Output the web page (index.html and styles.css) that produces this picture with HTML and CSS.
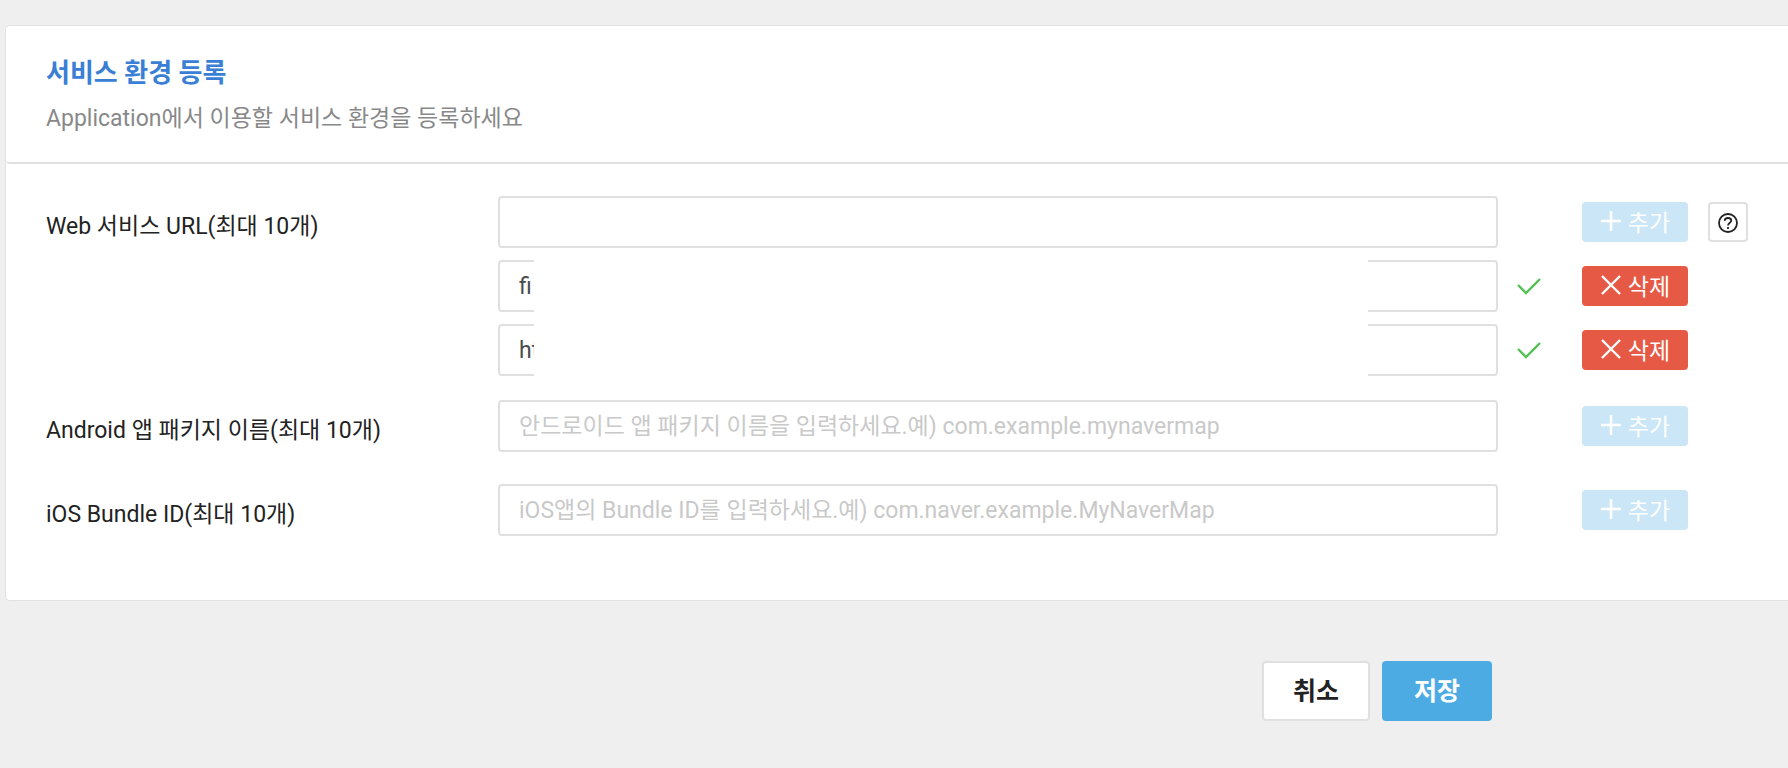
FILE: index.html
```html
<!DOCTYPE html>
<html lang="ko">
<head>
    <meta charset="UTF-8">
    <title>서비스 환경 등록</title>
    <link rel="stylesheet" href="styles.css">
</head>
<body>
    <svg class="icon-defs" aria-hidden="true">
        <symbol id="icon-plus" viewBox="0 0 22 22">
            <path d="M11 1v20M1 11h20" fill="none" stroke="currentColor" stroke-width="2.500"/>
        </symbol>
        <symbol id="icon-close" viewBox="0 0 22 22">
            <path d="M2 2l18 18M20 2L2 20" fill="none" stroke="currentColor" stroke-width="2.400"/>
        </symbol>
        <symbol id="icon-check" viewBox="0 0 24 18">
            <path d="M1 8l8 8L23 2" fill="none" stroke="currentColor" stroke-width="2.400"/>
        </symbol>
    </svg>

    <form class="service-form">
        <section class="panel">
            <header class="panel-header">
                <h1>서비스 환경 등록</h1>
                <p>Application에서 이용할 서비스 환경을 등록하세요</p>
            </header>

            <div class="panel-body">
                <!-- Web 서비스 URL -->
                <div class="form-row web-row">
                    <label class="form-label" for="web-url">Web 서비스 URL(최대 10개)</label>
                    <div class="field-list">
                        <div class="field">
                            <div class="input-wrap">
                                <input type="text" id="web-url">
                            </div>
                            <span class="status"></span>
                            <button type="button" class="btn btn-add" disabled><svg><use href="#icon-plus"/></svg>추가</button>
                            <button type="button" class="btn-help" aria-label="도움말">
                                <svg viewBox="0 0 20 20" fill="none" stroke="currentColor" stroke-width="1.800">
                                    <circle cx="10" cy="10" r="9"/>
                                    <path d="M6.700 7.800C6.700 5.800 8 5 10 5s3.300 1 3.300 2.600C13.300 9.800 10 9.800 10 12.500"/>
                                    <path d="M10 14v2"/>
                                </svg>
                            </button>
                        </div>
                        <div class="field">
                            <div class="input-wrap masked">
                                <input type="text" value="fi" aria-label="Web 서비스 URL 1">
                            </div>
                            <span class="status"><svg><use href="#icon-check"/></svg></span>
                            <button type="button" class="btn btn-delete"><svg><use href="#icon-close"/></svg>삭제</button>
                        </div>
                        <div class="field">
                            <div class="input-wrap masked">
                                <input type="text" value="ht" aria-label="Web 서비스 URL 2">
                            </div>
                            <span class="status"><svg><use href="#icon-check"/></svg></span>
                            <button type="button" class="btn btn-delete"><svg><use href="#icon-close"/></svg>삭제</button>
                        </div>
                    </div>
                </div>

                <!-- Android -->
                <div class="form-row">
                    <label class="form-label" for="android-package">Android 앱 패키지 이름(최대 10개)</label>
                    <div class="field">
                        <div class="input-wrap">
                            <input type="text" id="android-package" placeholder="안드로이드 앱 패키지 이름을 입력하세요.예) com.example.mynavermap">
                        </div>
                        <span class="status"></span>
                        <button type="button" class="btn btn-add" disabled><svg><use href="#icon-plus"/></svg>추가</button>
                    </div>
                </div>

                <!-- iOS -->
                <div class="form-row">
                    <label class="form-label" for="ios-bundle">iOS Bundle ID(최대 10개)</label>
                    <div class="field">
                        <div class="input-wrap">
                            <input type="text" id="ios-bundle" placeholder="iOS앱의 Bundle ID를 입력하세요.예) com.naver.example.MyNaverMap">
                        </div>
                        <span class="status"></span>
                        <button type="button" class="btn btn-add" disabled><svg><use href="#icon-plus"/></svg>추가</button>
                    </div>
                </div>
            </div>
        </section>

        <div class="form-actions">
            <button type="button" class="action-btn cancel">취소</button>
            <button type="submit" class="action-btn save">저장</button>
        </div>
    </form>
</body>
</html>
```
FILE: styles.css
```css
* {
    box-sizing: border-box;
}
body {
    margin: 0;
    background-color: #efefef;
    color: #222;
    font-family: Roboto, "Noto Sans CJK KR", sans-serif;
    font-size: 23px;
}
button, input {
    font-family: inherit;
    font-size: inherit;
}
.icon-defs {
    display: none;
}
.service-form {
    padding: 25px 0 48px 5px;
}
.panel {
    background: white;
    border: 1px solid #e2e2e2;
    border-right: none;
    border-radius: 5px 0 0 5px;
}
.panel-header {
    padding: 29px 40px 25px;
    border-bottom: 2px solid #e0e0e0;
    border-bottom-left-radius: 4px;
}
.panel-header h1 {
    margin: 0;
    font-size: 26px;
    font-weight: 700;
    line-height: 36px;
    color: #3a7fd5;
}
.panel-header p {
    margin: 10px 0 0;
    line-height: 36px;
    color: #888;
}
.panel-body {
    padding: 32px 40px 64px;
}
.form-row {
    display: grid;
    grid-template-columns: 452px 1fr;
    margin-bottom: 32px;
}
.form-row.web-row {
    margin-bottom: 24px;
}
.form-row:last-child {
    margin-bottom: 0;
}
.form-label {
    height: 52px;
    line-height: 62px;
}
.field-list {
    display: grid;
    gap: 12px;
}
.field {
    display: grid;
    grid-template-columns: 1fr 84px 106px 60px;
    align-items: center;
}
.input-wrap {
    position: relative;
}
.input-wrap input {
    display: block;
    width: 100%;
    height: 52px;
    padding: 0 19px;
    border: 2px solid #e0e0e0;
    border-radius: 4px;
    background: white;
    color: #4a4d50;
    outline: none;
}
.input-wrap input::placeholder {
    color: #c9c9c9;
    opacity: 1;
}
/* URL 가림 처리 */
.input-wrap.masked::after {
    content: "";
    position: absolute;
    top: 0;
    bottom: 0;
    left: 36px;
    right: 130px;
    background: white;
}
.status {
    padding-left: 19px;
    color: #52c152;
}
.status svg {
    display: block;
    width: 24px;
    height: 18px;
}
.btn {
    display: flex;
    align-items: center;
    justify-content: center;
    gap: 6px;
    height: 40px;
    padding: 0 0 2px;
    border: none;
    border-radius: 4px;
    color: white;
    cursor: pointer;
}
.btn svg {
    width: 22px;
    height: 22px;
}
.btn-add {
    background-color: #cbe6f7;
}
.btn-add:disabled {
    cursor: default;
}
.btn-delete {
    background-color: #e65a45;
}
.btn-help {
    display: flex;
    align-items: center;
    justify-content: center;
    width: 40px;
    height: 40px;
    margin-left: 20px;
    padding: 2px 0 0;
    border: 2px solid #e0e0e0;
    border-radius: 4px;
    background: white;
    color: #222;
    cursor: pointer;
}
.btn-help svg {
    width: 20px;
    height: 20px;
}
.form-actions {
    display: flex;
    justify-content: flex-end;
    gap: 12px;
    padding-top: 60px;
    padding-right: 296px;
}
.action-btn {
    width: 108px;
    height: 60px;
    padding: 0 0 4px;
    border: 2px solid #e0e0e0;
    border-radius: 4px;
    background: white;
    color: #222;
    font-size: 25px;
    font-weight: 700;
    cursor: pointer;
}
.action-btn.save {
    width: 110px;
    border-color: #4dabe4;
    background-color: #4dabe4;
    color: white;
}
```
